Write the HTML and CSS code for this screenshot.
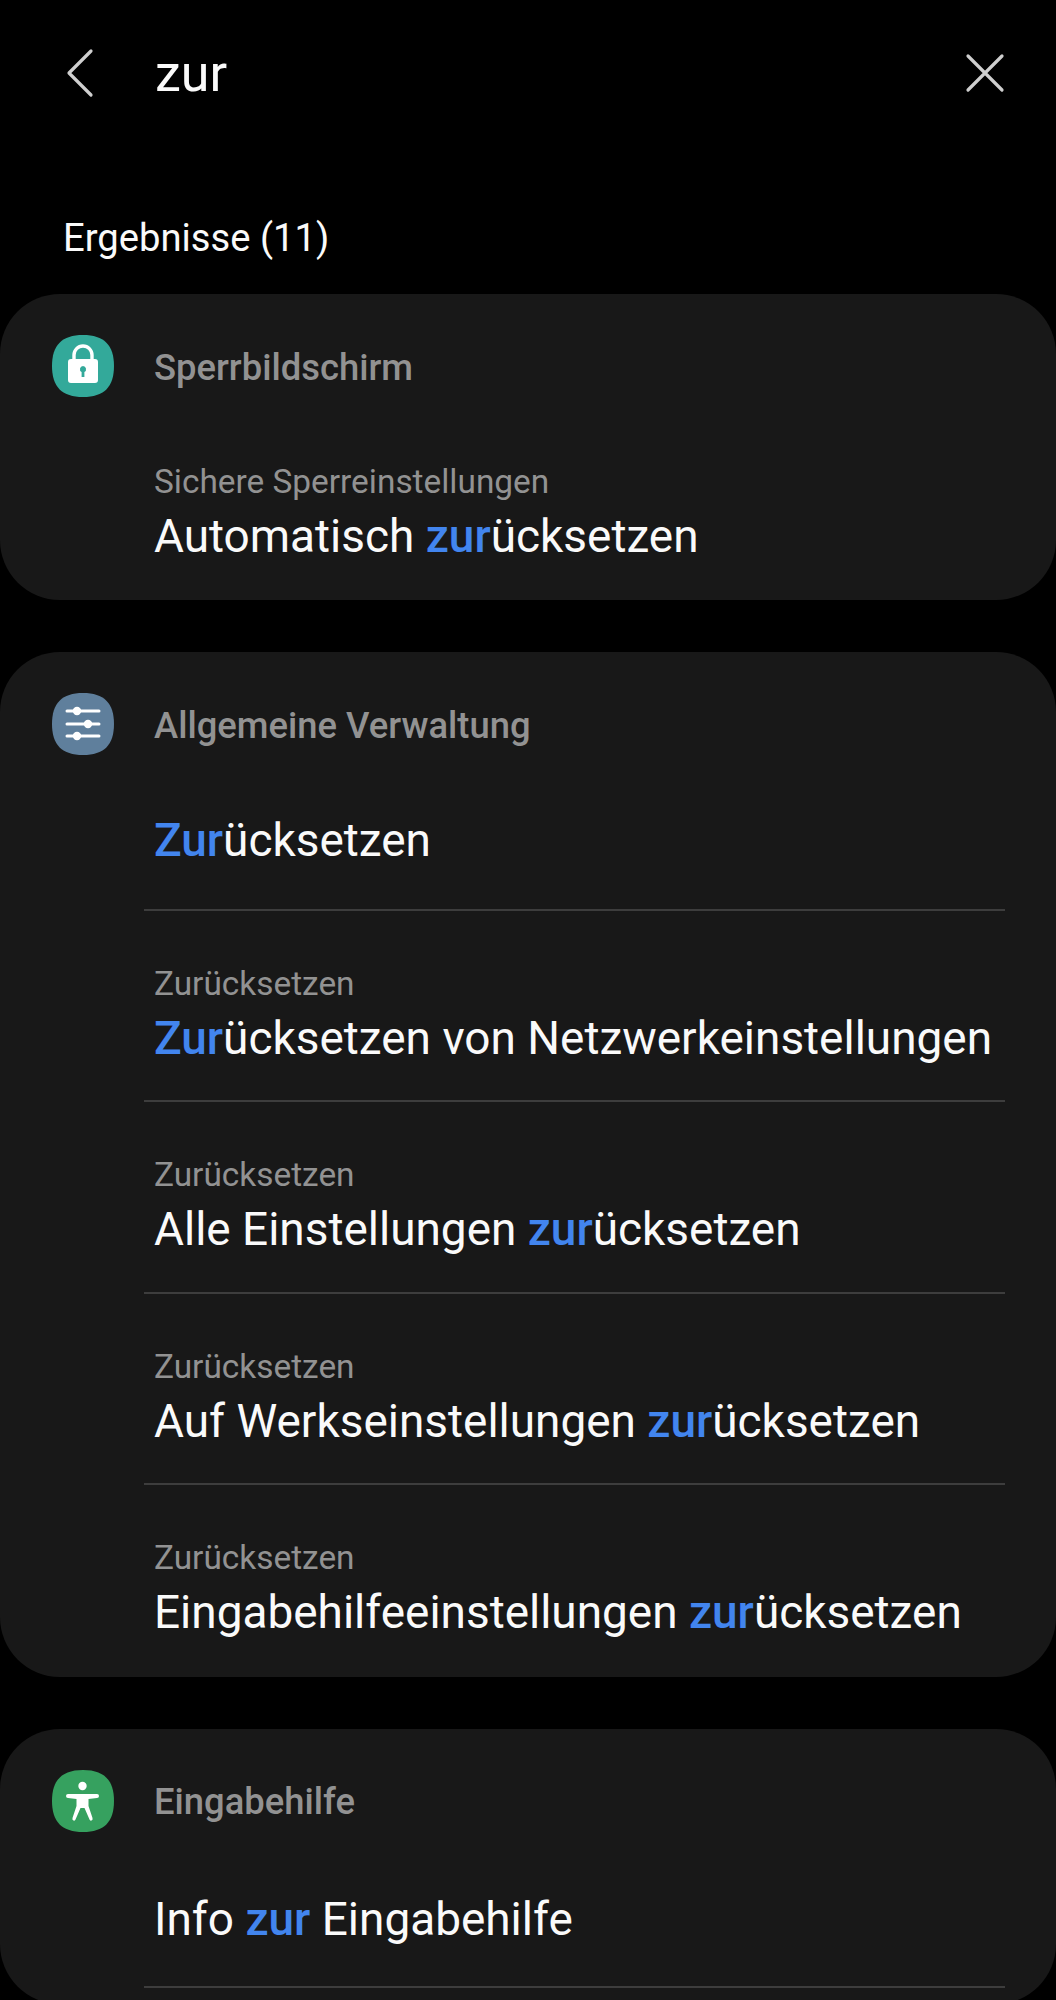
FILE: index.html
```html
<!DOCTYPE html>
<html lang="de">
<head>
    <meta charset="UTF-8">
    <meta name="viewport" content="width=device-width, initial-scale=1.0">
    <title>Einstellungen suchen</title>
    <link rel="stylesheet" href="styles.css">
</head>
<body>
    <header class="search-bar">
        <svg class="icon-back" width="30" height="50" viewBox="0 0 30 50">
            <path d="M26 3 L4 25 L26 47" fill="none" stroke="#cfcfcf" stroke-width="3.2" stroke-linecap="round" stroke-linejoin="round"/>
        </svg>
        <div class="search-text">zur</div>
        <svg class="icon-close" width="40" height="40" viewBox="0 0 40 40">
            <path d="M3 3 L37 37 M37 3 L3 37" fill="none" stroke="#cfcfcf" stroke-width="3.2" stroke-linecap="round"/>
        </svg>
    </header>

    <h2 class="results-title">Ergebnisse (11)</h2>

    <section class="card">
        <div class="card-head">
            <svg class="app-icon" width="62" height="62" viewBox="0 0 62 62">
                <path class="squircle-teal" d="M31 0 C52 0 62 10 62 31 C62 52 52 62 31 62 C10 62 0 52 0 31 C0 10 10 0 31 0 Z"/>
                <path d="M22 28 V20 A9 9 0 0 1 40 20 V28" fill="none" stroke="#fff" stroke-width="3.4"/>
                <path fill-rule="evenodd" fill="#fff" d="M19 24 H43 Q46 24 46 27 V45 Q46 48 43 48 H19 Q16 48 16 45 V27 Q16 24 19 24 Z M31 31 A3.2 3.2 0 0 0 29.6 37 L29.6 42 H32.4 L32.4 37 A3.2 3.2 0 0 0 31 31 Z"/>
            </svg>
            <div class="card-title">Sperrbildschirm</div>
        </div>
        <div class="row row-last">
            <div class="row-sub">Sichere Sperreinstellungen</div>
            <div class="row-main">Automatisch <b>zur</b>ücksetzen</div>
        </div>
    </section>

    <section class="card card-long">
        <div class="card-head">
            <svg class="app-icon" width="62" height="62" viewBox="0 0 62 62">
                <path class="squircle-slate" d="M31 0 C52 0 62 10 62 31 C62 52 52 62 31 62 C10 62 0 52 0 31 C0 10 10 0 31 0 Z"/>
                <path d="M15 18 H47 M15 31 H47 M15 43 H47" stroke="#fff" stroke-width="3" stroke-linecap="round"/>
                <circle cx="25" cy="18" r="4.2" fill="#fff"/>
                <circle cx="36" cy="31" r="4.2" fill="#fff"/>
                <circle cx="25" cy="43" r="4.2" fill="#fff"/>
            </svg>
            <div class="card-title">Allgemeine Verwaltung</div>
        </div>
        <div class="row row-plain">
            <div class="row-main"><b>Zur</b>ücksetzen</div>
        </div>
        <div class="row">
            <div class="row-sub">Zurücksetzen</div>
            <div class="row-main"><b>Zur</b>ücksetzen von Netzwerkeinstellungen</div>
        </div>
        <div class="row">
            <div class="row-sub">Zurücksetzen</div>
            <div class="row-main">Alle Einstellungen <b>zur</b>ücksetzen</div>
        </div>
        <div class="row">
            <div class="row-sub">Zurücksetzen</div>
            <div class="row-main">Auf Werkseinstellungen <b>zur</b>ücksetzen</div>
        </div>
        <div class="row row-last">
            <div class="row-sub">Zurücksetzen</div>
            <div class="row-main">Eingabehilfeeinstellungen <b>zur</b>ücksetzen</div>
        </div>
    </section>

    <section class="card card-end">
        <div class="card-head">
            <svg class="app-icon" width="62" height="62" viewBox="0 0 62 62">
                <path class="squircle-green" d="M31 0 C52 0 62 10 62 31 C62 52 52 62 31 62 C10 62 0 52 0 31 C0 10 10 0 31 0 Z"/>
                <circle cx="30.5" cy="16" r="4.2" fill="#fff"/>
                <path fill="#fff" d="M16 24 H45 Q47 24 47 26 Q47 28 45 28 L36.5 29 L36.5 36 L40.5 48 Q41 50 39.5 50.5 Q38 51 37.5 49.5 L32.5 38 H28.5 L23.5 49.5 Q23 51 21.5 50.5 Q20 50 20.5 48 L24.5 36 L24.5 29 L16 28 Q14 28 14 26 Q14 24 16 24 Z"/>
            </svg>
            <div class="card-title">Eingabehilfe</div>
        </div>
        <div class="row row-plain">
            <div class="row-main">Info <b>zur</b> Eingabehilfe</div>
        </div>
    </section>
</body>
</html>
```

FILE: styles.css
```css
html, body {
    height: 2000px;
    overflow: hidden;
}
body {
    margin: 0;
    background: #000;
    color: #fafafa;
    font-family: Roboto, "Liberation Sans", sans-serif;
}
.search-bar {
    display: flex;
    align-items: center;
    height: 146px;
    padding: 0 51px 0 65px;
}
.icon-back {
    flex: none;
}
.search-text {
    flex: 1;
    margin-left: 60px;
    font-size: 52px;
}
.results-title {
    margin: 0;
    padding: 0 0 0 63px;
    height: 148px;
    line-height: 184px;
    font-size: 38.2px;
    font-weight: 400;
}
.card {
    background: #181818;
    border-radius: 60px;
    padding-top: 41px;
    margin-bottom: 52px;
}
.card-head {
    display: flex;
    align-items: center;
    gap: 40px;
    padding-left: 52px;
    margin-bottom: 12px;
}
.app-icon {
    flex: none;
}
.squircle-teal { fill: #33a99a; }
.squircle-slate { fill: #5f7f9c; }
.squircle-green { fill: #36a15f; }
.card-title {
    padding-top: 2px;
    font-size: 36.4px;
    font-weight: 500;
    color: #929292;
}
.row {
    margin: 0 51px 0 144px;
    padding: 48px 0 32.4px 10px;
    border-bottom: 2px solid #3d3d3d;
}
.row-plain {
    padding-top: 44px;
    padding-bottom: 39px;
}
.row-last {
    border-bottom: none;
    padding-bottom: 34px;
}
.card-long .row-last {
    padding-bottom: 34.4px;
}
.card-end {
    padding-bottom: 16px;
}
.card-end .row-plain {
    padding-top: 46px;
    padding-bottom: 37px;
}
.row-sub {
    line-height: 50px;
    font-size: 33.4px;
    color: #929292;
}
.row-main {
    line-height: 59px;
    font-size: 45.95px;
    white-space: nowrap;
}
.row-main b {
    font-weight: 500;
    color: #4285ee;
}
```
